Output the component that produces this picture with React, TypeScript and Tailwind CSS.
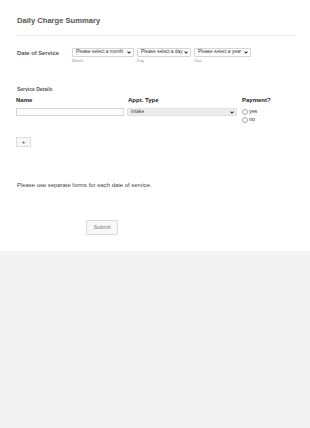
import React from 'react';

function Chevron() {
  return (
    <svg width="4" height="3" viewBox="0 0 10 8" className="shrink-0">
      <path d="M1 1.5 L5 5.5 L9 1.5" fill="none" stroke="#333" strokeWidth="2.8" />
    </svg>
  );
}

function DateSelect({ text, label, width }: { text: string; label: string; width: string }) {
  return (
    <div className={`flex flex-col ${width}`}>
      <div className="flex h-[9px] items-center justify-between rounded-[1px] border border-[#d6d6d6] bg-white pl-[3px] pr-[2px] text-[4.8px] leading-none text-[#333]">
        <span className="whitespace-nowrap">{text}</span>
        <Chevron />
      </div>
      <span className="mt-[1px] text-[4px] leading-[6px] text-[#9a9a9a]">{label}</span>
    </div>
  );
}

export default function App() {
  return (
    <div className="min-h-[428px] bg-[#f3f3f3] font-['Liberation_Sans',Arial,sans-serif]">
      <div className="h-[251px] bg-white px-4">
        <h1 className="ml-[1px] pt-[16px] text-[7.6px] font-bold leading-[10px] text-[#555]">Daily Charge Summary</h1>
        <div className="mt-[9px] h-px bg-[#ebebeb]" />

        <div className="mt-[12px] flex items-start">
          <span className="ml-[1px] w-[55px] pt-[1px] text-[5.8px] font-bold leading-[8px] text-[#555]">Date of Service</span>
          <div className="flex gap-[3px]">
            <DateSelect text="Please select a month" label="Month" width="w-[62px]" />
            <DateSelect text="Please select a day" label="Day" width="w-[54px]" />
            <DateSelect text="Please select a year" label="Year" width="w-[57px]" />
          </div>
        </div>

        <p className="mt-[22px] ml-[1px] text-[5px] font-bold leading-[7px] text-[#555]">Service Details</p>
        <div className="mt-[2px] grid grid-cols-[108px_110px_1fr] gap-x-[3px]">
          <span className="text-[6px] font-bold leading-[10px] text-[#222]">Name</span>
          <span className="pl-[1px] text-[6px] font-bold leading-[10px] text-[#222]">Appt. Type</span>
          <span className="pl-[2px] text-[6px] font-bold leading-[10px] text-[#222]">Payment?</span>

          <div className="mt-[3px] h-[8px] border border-[#d4d4d4] bg-white" />
          <div className="mt-[3px] flex h-[8px] items-center justify-between border border-[#e2e2e2] bg-[#ececec] pl-[3px] pr-[2px] text-[4.8px] leading-none text-[#444]">
            <span>Intake</span>
            <Chevron />
          </div>
          <div className="mt-[3px] flex flex-col gap-[1px] pl-[2px]">
            <label className="flex items-center gap-[1px] text-[5.3px] leading-[7px] text-[#333]">
              <span className="h-[6px] w-[6px] rounded-full border border-[#aaa] bg-white" />
              yes
            </label>
            <label className="flex items-center gap-[1px] text-[5.3px] leading-[7px] text-[#333]">
              <span className="h-[6px] w-[6px] rounded-full border border-[#aaa] bg-white" />
              no
            </label>
          </div>
        </div>

        <button className="mt-[14px] flex h-[10px] w-[15px] items-center justify-center border border-[#dcdcdc] bg-[#f7f7f7] text-[6px] leading-none text-[#333]">
          +
        </button>

        <p className="mt-[34px] ml-[1px] text-[5.9px] leading-[8px] text-[#444]">
          Please use separate forms for each date of service.
        </p>

        <div className="mt-[31px] pl-[70px]">
          <button className="flex h-[15px] w-[32px] items-center justify-center rounded-[1px] border border-[#d9d9d9] bg-[#f8f8f8] text-[5.5px] leading-none text-[#777]">
            Submit
          </button>
        </div>
      </div>
    </div>
  );
}
